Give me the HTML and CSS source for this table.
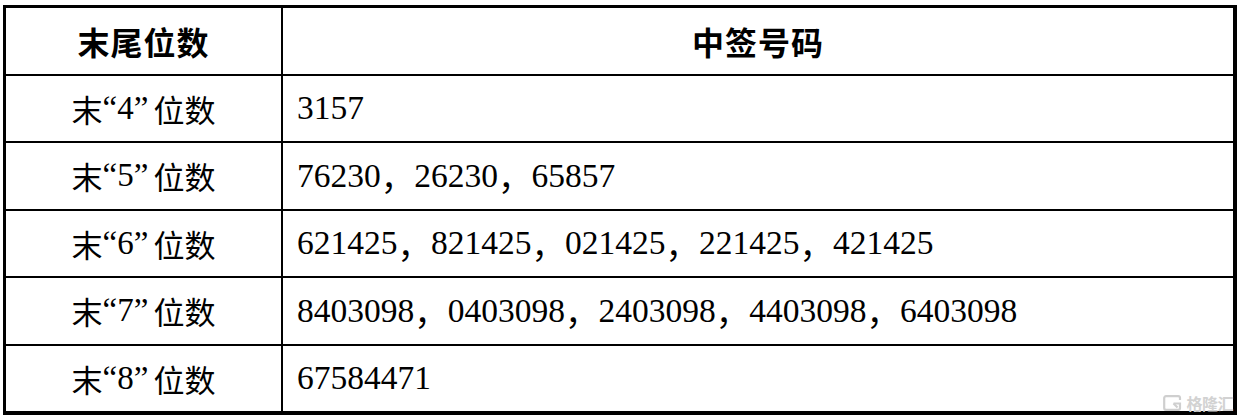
FILE: index.html
```html
<!DOCTYPE html>
<html lang="zh-CN">
<head>
<meta charset="utf-8">
<title>中签号码</title>
<link rel="stylesheet" href="styles.css">
</head>
<body>
<div class="page">
  <div class="table">
    <div class="cell head">末尾位数</div>
    <div class="cell head">中签号码</div>

    <div class="cell label">末<span class="q">“4”</span>位数</div>
    <div class="cell nums">3157</div>

    <div class="cell label">末<span class="q">“5”</span>位数</div>
    <div class="cell nums">76230<span class="c">，</span>26230<span class="c">，</span>65857</div>

    <div class="cell label">末<span class="q">“6”</span>位数</div>
    <div class="cell nums">621425<span class="c">，</span>821425<span class="c">，</span>021425<span class="c">，</span>221425<span class="c">，</span>421425</div>

    <div class="cell label">末<span class="q">“7”</span>位数</div>
    <div class="cell nums">8403098<span class="c">，</span>0403098<span class="c">，</span>2403098<span class="c">，</span>4403098<span class="c">，</span>6403098</div>

    <div class="cell label">末<span class="q">“8”</span>位数</div>
    <div class="cell nums">67584471</div>
  </div>
  <div class="watermark">
    <svg class="wm-icon" viewBox="0 0 20 16" width="20" height="16" aria-hidden="true">
      <path d="M17 5 V3 A1.8 1.8 0 0 0 15.2 1.2 H3 A1.8 1.8 0 0 0 1.2 3 V13 A1.8 1.8 0 0 0 3 14.8 H15.2 A1.8 1.8 0 0 0 17 13 V8.5 H10.5" fill="none" stroke="#cfcfcf" stroke-width="2.2"/>
      <path d="M10.5 8.5 L14.5 12.5" fill="none" stroke="#cfcfcf" stroke-width="2.2"/>
    </svg>
    <span class="wm-text">格隆汇</span>
  </div>
</div>
</body>
</html>
```

FILE: styles.css
```css
html, body {
  margin: 0;
  padding: 0;
  background: #ffffff;
}

.page {
  position: relative;
  width: 1242px;
  height: 420px;
  padding: 5px 0 0 3px;
  box-sizing: border-box;
}

.table {
  display: grid;
  grid-template-columns: 275px 950px;
  grid-template-rows: repeat(6, 1fr);
  gap: 2px;
  width: 1234px;
  height: 410px;
  box-sizing: border-box;
  background: #000;
  border-style: solid;
  border-color: #000;
  border-width: 3px 4px 4px 3px;
}

.cell {
  background: #fff;
  display: flex;
  align-items: center;
  color: #000;
}

.head {
  justify-content: center;
  font-family: "Noto Sans CJK SC", sans-serif;
  font-weight: 700;
  font-size: 32px;
  letter-spacing: 1px;
}

.label {
  justify-content: center;
  font-family: "Noto Sans CJK SC", sans-serif;
  font-size: 31px;
  font-weight: 400;
}

.label .q {
  font-family: "Liberation Serif", serif;
  font-size: 33px;
  margin-right: 5px;
}

.nums {
  padding-left: 14px;
  font-family: "Liberation Serif", "Noto Sans CJK SC", serif;
  font-size: 33.5px;
}

.nums .c {
  font-family: "Noto Sans CJK SC", sans-serif;
  font-size: 33.5px;
}

.watermark {
  position: absolute;
  right: 9px;
  bottom: 9px;
  display: flex;
  align-items: center;
  gap: 3px;
}

.wm-text {
  font-family: "Noto Sans CJK SC", sans-serif;
  font-weight: 700;
  font-size: 16px;
  line-height: 16px;
  color: #d2d2d2;
  letter-spacing: -0.5px;
}
```
